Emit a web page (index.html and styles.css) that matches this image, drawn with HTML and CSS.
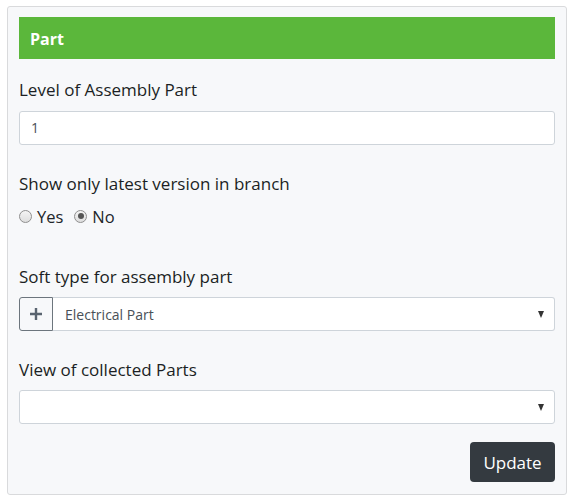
FILE: index.html
```html
<!DOCTYPE html>
<html>
<head>
<meta charset="utf-8">
<link rel="stylesheet" href="styles.css">
</head>
<body>
<div class="card">
  <div class="header">Part</div>
  <div class="group g1">
    <div class="label">Level of Assembly Part</div>
    <div class="input">1</div>
  </div>
  <div class="group g2">
    <div class="label">Show only latest version in branch</div>
    <div class="radios">
      <span class="radio"></span><span class="rlabel">Yes</span>
      <span class="radio checked"></span><span class="rlabel">No</span>
    </div>
  </div>
  <div class="group g3">
    <div class="label">Soft type for assembly part</div>
    <div class="inputgroup">
      <div class="plus"><svg width="14" height="14" viewBox="0 0 14 14"><path d="M7 1v12M1 7h12" stroke="#5a6470" stroke-width="2.4"/></svg></div>
      <div class="select joined"><span class="seltext">Electrical Part</span><span class="caret"></span></div>
    </div>
  </div>
  <div class="group g4">
    <div class="label">View of collected Parts</div>
    <div class="select"><span class="seltext"></span><span class="caret"></span></div>
  </div>
  <div class="actions"><button class="btn">Update</button></div>
</div>
</body>
</html>
```
FILE: styles.css
```css
* { box-sizing: border-box; }
body {
  margin: 0;
  background: #ffffff;
  font-family: "Open Sans", "Noto Sans", sans-serif;
  color: #212529;
}
.card {
  margin: 6px 0 0 7px;
  width: 560px;
  height: 489px;
  border: 1px solid #d9dadc;
  border-radius: 3px;
  background: #f7f8fa;
  padding: 10px 11px 11px 11px;
  display: flex;
  flex-direction: column;
}
.header {
  background: #5bb73b;
  color: #fff;
  font-weight: 700;
  font-size: 16px;
  height: 42px;
  line-height: 44px;
  padding-left: 11px;
}
.label {
  font-size: 17px;
  line-height: 22px;
  font-weight: 500;
  color: #1b1f24;
}
.g1 { margin-top: 20px; }
.g1 .label { margin-bottom: 10px; }
.input {
  height: 34px;
  border: 1px solid #ced4da;
  border-radius: 3px;
  background: #fff;
  font-size: 14px;
  color: #495057;
  line-height: 32px;
  padding-left: 11px;
}
.g2 { margin-top: 28px; }
.radios {
  display: flex;
  align-items: center;
  margin-top: 10px;
  font-size: 16.5px;
  height: 22px;
}
.radio {
  width: 13px;
  height: 13px;
  border: 1px solid #8f8f8f;
  border-radius: 50%;
  background: linear-gradient(#f4f4f4, #dedede);
  margin-right: 5px;
  position: relative;
}
.radio.checked::after {
  content: "";
  position: absolute;
  left: 2.5px;
  top: 2.5px;
  width: 6px;
  height: 6px;
  border-radius: 50%;
  background: #555;
}
.rlabel { margin-right: 11px; }
.g3 { margin-top: 39px; }
.g3 .label { margin-bottom: 9px; }
.inputgroup {
  display: flex;
  height: 34px;
}
.plus {
  width: 34px;
  height: 34px;
  border: 1px solid #6c757d;
  border-radius: 3px 0 0 3px;
  background: #f7f8fa;
  display: flex;
  align-items: center;
  justify-content: center;
}
.select {
  flex: 1;
  height: 34px;
  border: 1px solid #ced4da;
  border-radius: 3px;
  background: #fff;
  display: flex;
  align-items: center;
  justify-content: space-between;
  padding: 0 10px 0 12px;
  font-size: 14px;
  color: #495057;
}
.select.joined {
  border-left: none;
  border-radius: 0 3px 3px 0;
}
.caret {
  width: 0;
  height: 0;
  border-left: 3.5px solid transparent;
  border-right: 3.5px solid transparent;
  border-top: 7px solid #333;
}
.g4 { margin-top: 28px; }
.g4 .label { margin-bottom: 9px; }
.actions {
  margin-top: 18px;
  display: flex;
  justify-content: flex-end;
}
.btn {
  background: #343a40;
  color: #fff;
  border: none;
  border-radius: 4px;
  height: 40px;
  width: 85px;
  font-family: inherit;
  font-size: 17px;
}
```
